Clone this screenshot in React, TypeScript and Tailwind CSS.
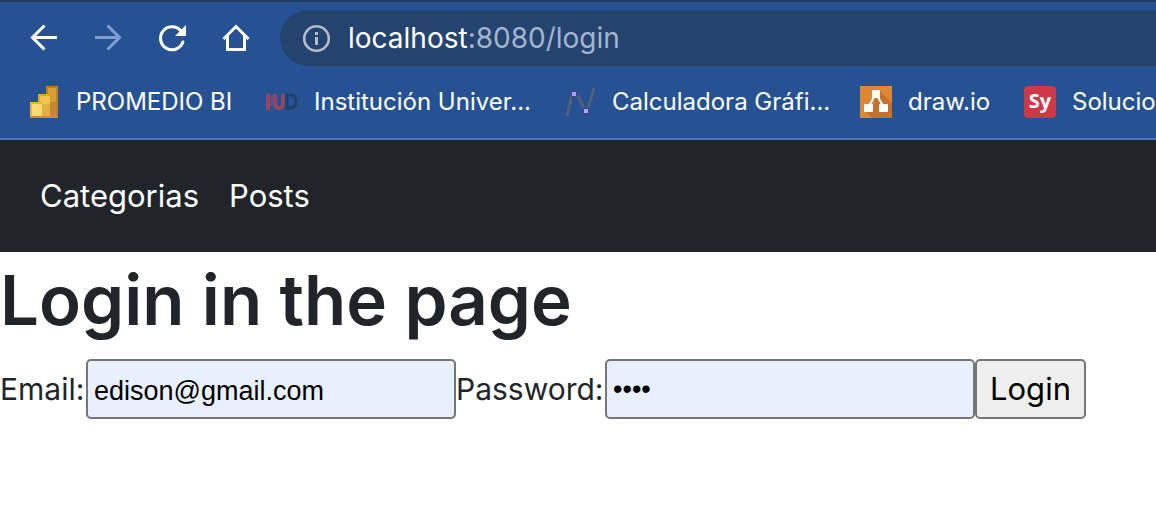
import type { ReactNode } from "react";

function ToolButton({ label, dim, children }: { label: string; dim?: boolean; children: ReactNode }) {
  return (
    <button type="button" aria-label={label} className={dim ? "shrink-0 text-[#7f9fd0]" : "shrink-0 text-white"}>
      <svg viewBox="0 0 32 32" className="block size-8" fill="none" stroke="currentColor" strokeWidth="3">
        {children}
      </svg>
    </button>
  );
}

function Bookmark({ label, width, icon }: { label: string; width: string; icon: ReactNode }) {
  return (
    <a href="#" className="flex shrink-0 items-center gap-4">
      <svg viewBox="0 0 32 32" className="block size-8 shrink-0">
        {icon}
      </svg>
      <span className={`whitespace-nowrap ${width}`}>{label}</span>
    </a>
  );
}

const powerBi = (
  <>
    <path d="M18 0H30V32H18Z" fill="#c07a2c" />
    <path d="M20 2H28V32H20Z" fill="#d99e30" />
    <path d="M22 16H28V32H22Z" fill="#c98630" />
    <path d="M10 8H22V32H10Z" fill="#d9a637" />
    <path d="M12 10H22V32H12Z" fill="#efc54e" />
    <path d="M14 18H22V32H14Z" fill="#e2b040" />
    <path d="M2 16H14V32H2Z" fill="#e3b34a" />
    <path d="M4 18H14V30H4Z" fill="#f8dc70" />
    <path d="M2 30H30V32H2Z" fill="#cf8c30" />
  </>
);

const iud = (
  <g fill="none">
    <path d="M2 8V24M9 8V17Q9 22 13 22T17 17V8" stroke="#8f4764" strokeWidth="4" />
    <path d="M6 9V20" stroke="#6d4a78" strokeWidth="3" />
    <path d="M21 9V22H24Q30 22 30 15.500T24 9Z" stroke="#1c416a" strokeWidth="3" />
  </g>
);

const grapher = (
  <>
    <path d="M3 30L7 13Q10 3 14 10L19 20Q23 27 26 16L30 2" fill="none" stroke="#4f5f7c" strokeWidth="3" />
    <circle cx="10" cy="8" r="4" fill="#3d4684" />
    <circle cx="22" cy="25" r="4" fill="#3d4684" />
    <path d="M8 6H12V10H8ZM20 23H24V27H20Z" fill="#aca4f2" />
  </>
);

const drawIo = (
  <>
    <path d="M0 0H32V32H0Z" fill="#dc8734" />
    <path d="M20 5L32 17V32H12L5 25L14 18V12Z" fill="#c8702b" />
    <path d="M14 11L9 20M18 11L23 20" stroke="#fff" strokeWidth="2" />
    <rect x="12" y="4" width="8" height="8" rx="1" fill="#fff" />
    <rect x="4" y="18" width="9" height="8" rx="1" fill="#fff" />
    <rect x="19" y="18" width="9" height="8" rx="1" fill="#fff" />
  </>
);

const symbolab = (
  <>
    <rect width="32" height="32" rx="4" fill="#cf3847" />
    <text x="16" y="22" textAnchor="middle" fill="#fff" fontFamily="Open Sans, sans-serif" fontSize="20" fontWeight="700">
      Sy
    </text>
  </>
);

function BrowserBar() {
  return (
    <header className="border-y-2 border-t-[#1b3a66] border-b-[#4b78b2] bg-[#265294] pt-2">
      <div className="flex items-center gap-8 pl-7">
        <ToolButton label="Back">
          <path d="M29 15.5H5M16.5 3.5L4.5 15.5L16.5 27.5" />
        </ToolButton>
        <ToolButton label="Forward" dim>
          <path d="M3 15.5H27M15.5 3.5L27.5 15.5L15.5 27.5" />
        </ToolButton>
        <ToolButton label="Reload">
          <path d="M24.5 8.5A11.5 11.5 0 1 0 26.9 20" strokeLinecap="round" />
          <path d="M30 3V14H19Z" fill="currentColor" stroke="none" />
        </ToolButton>
        <ToolButton label="Home">
          <path d="M3.5 17L16 4.5L28.5 17M7.5 14V27.5H24.5V14" />
        </ToolButton>
        <div className="-ml-1 flex h-14 min-w-0 grow items-center gap-4 rounded-l-full bg-[#24446f] pl-5">
          <svg viewBox="0 0 32 32" className="size-8 shrink-0" fill="none" stroke="#b4bdcb" strokeWidth="2.6">
            <circle cx="16.5" cy="16.5" r="12.3" />
            <path d="M16.5 10V13M16.5 15V23" strokeWidth="3" />
          </svg>
          <p className="text-[28px] leading-8 whitespace-nowrap text-[#a3b5d0]">
            <span className="text-white">localhost</span>:8080/login
          </p>
        </div>
      </div>
      <nav aria-label="Bookmarks" className="flex h-18 items-center gap-8 overflow-hidden pl-7 text-2xl text-white">
        <Bookmark label="PROMEDIO BI" width="w-[158px]" icon={powerBi} />
        <Bookmark label="Institución Univer..." width="w-[218px]" icon={iud} />
        <Bookmark label="Calculadora Gráfi..." width="w-[216px]" icon={grapher} />
        <Bookmark label="draw.io" width="w-[84px]" icon={drawIo} />
        <Bookmark label="Solucio" width="w-[84px]" icon={symbolab} />
      </nav>
    </header>
  );
}

export default function App() {
  return (
    <div className="min-h-screen overflow-x-hidden bg-white font-['Inter',sans-serif] text-[#212529]">
      <BrowserBar />
      <nav className="flex h-28 items-center gap-[30px] bg-[#212529] px-10 text-[31px] text-white">
        <a href="#">Categorias</a>
        <a href="#">Posts</a>
      </nav>
      <main>
        <h1 className="mb-[11px] text-[69px] leading-[96px] font-semibold">Login in the page</h1>
        <form className="flex items-center leading-9" onSubmit={(e) => e.preventDefault()}>
          <label htmlFor="email" className="w-[86px] shrink-0 text-[30px] whitespace-nowrap">Email:</label>
          <input
            id="email"
            type="email"
            defaultValue="edison@gmail.com"
            className="h-[60px] w-[370px] rounded-[5px] border-2 border-[#767676] bg-[#e8f0fe] px-1.5 pt-1 font-['Liberation_Sans',sans-serif] text-[27px] text-black"
          />
          <label htmlFor="password" className="w-[149px] shrink-0 text-[30px] whitespace-nowrap">Password:</label>
          <input
            id="password"
            type="password"
            defaultValue="1234"
            className="h-[60px] w-[370px] rounded-[5px] border-2 border-[#767676] bg-[#e8f0fe] px-1.5 font-['Liberation_Sans',sans-serif] text-[27px] text-black"
          />
          <button type="submit" className="h-[60px] rounded-[5px] border-2 border-[#767676] bg-[#efefef] px-[13px] text-[31px] text-black">
            Login
          </button>
        </form>
      </main>
    </div>
  );
}
